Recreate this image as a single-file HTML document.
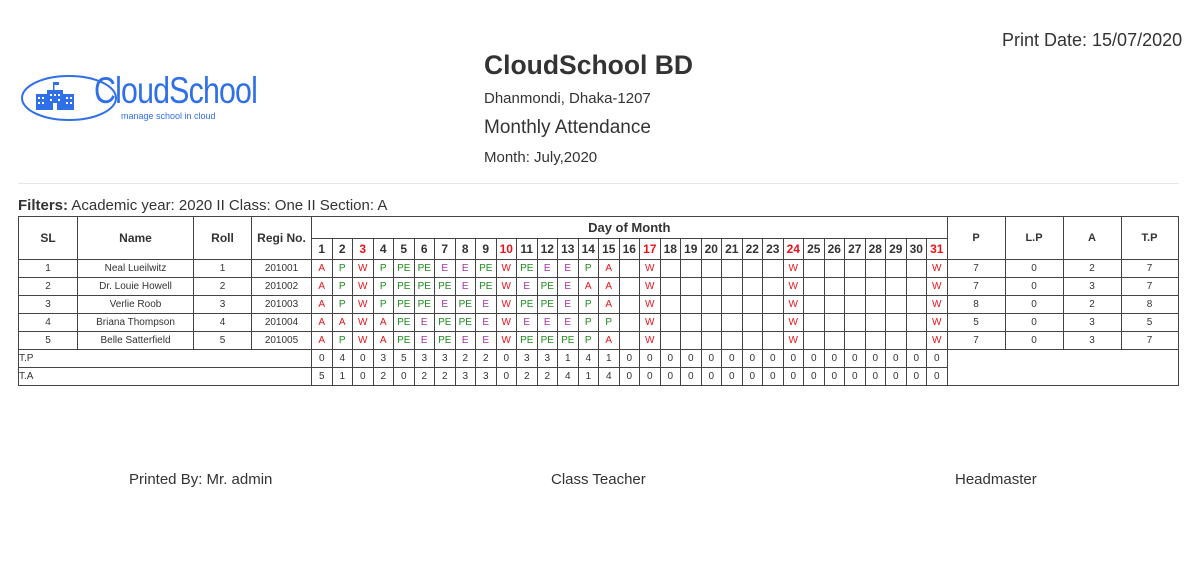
<!DOCTYPE html>
<html><head><meta charset="utf-8"><style>
*{margin:0;padding:0;box-sizing:border-box}
body{width:1196px;height:579px;background:#fff;font-family:"Liberation Sans",sans-serif;color:#333;position:relative;overflow:hidden}
.a{position:absolute;white-space:nowrap}
table{position:absolute;left:18px;top:216px;border-collapse:collapse;table-layout:fixed;font-size:10px}
td,th{border:1px solid #444;text-align:center;padding:0;overflow:hidden;white-space:nowrap}
th{font-weight:bold;font-size:12px}
tr.d td{height:18px}
.r{color:#e8141b}.g{color:#1c8c1c}.e{color:#a3339f}
th.r{color:#e8141b}
.l{text-align:left}
</style></head><body>
<div class="a" style="left:1002px;top:30px;font-size:18px">Print Date: 15/07/2020</div>
<div class="a" style="left:484px;top:50px;font-size:26.5px;font-weight:bold">CloudSchool BD</div>
<div class="a" style="left:484px;top:90px;font-size:15px">Dhanmondi, Dhaka-1207</div>
<div class="a" style="left:484px;top:117px;font-size:19px">Monthly Attendance</div>
<div class="a" style="left:484px;top:149px;font-size:15px">Month: July,2020</div>
<div class="a" style="left:18px;top:183px;width:1161px;height:1px;background:#e6e6e6"></div>
<svg class="a" style="left:20px;top:74px" width="100" height="48"><ellipse cx="49" cy="24" rx="47" ry="22" fill="none" stroke="#2f6fe8" stroke-width="2"/><g fill="#2f6fe8"><rect x="16" y="20" width="11" height="16"/><rect x="27" y="16" width="16" height="20"/><rect x="43" y="20" width="11" height="16"/><rect x="33" y="8" width="1.5" height="8"/><rect x="34" y="8" width="5" height="3"/></g><g fill="#fff"><rect x="18" y="23" width="2" height="2"/><rect x="22" y="23" width="2" height="2"/><rect x="18" y="28" width="2" height="2"/><rect x="22" y="28" width="2" height="2"/><rect x="30" y="20" width="2" height="2"/><rect x="34" y="20" width="2" height="2"/><rect x="38" y="20" width="2" height="2"/><rect x="30" y="25" width="2" height="2"/><rect x="38" y="25" width="2" height="2"/><rect x="33" y="29" width="4" height="7"/><rect x="46" y="23" width="2" height="2"/><rect x="50" y="23" width="2" height="2"/><rect x="46" y="28" width="2" height="2"/><rect x="50" y="28" width="2" height="2"/></g></svg>
<div class="a" style="left:94px;top:70px;font-size:37px;color:#2f6fe8;font-family:'Liberation Sans Narrow','Liberation Sans',sans-serif;transform:scaleX(0.82);transform-origin:left;letter-spacing:-1px;font-weight:100">CloudSchool</div>
<div class="a" style="left:121px;top:111px;font-size:9px;color:#2f6fe8">manage school in cloud</div>
<div class="a" style="left:18px;top:197px;font-size:15px"><b>Filters:</b> Academic year: 2020 II Class: One II Section: A</div>
<table id="t">
<colgroup><col style="width:59px"><col style="width:116px"><col style="width:58px"><col style="width:60px"></colgroup>
</table>
<div class="a" style="left:129px;top:471px;font-size:15px">Printed By: Mr. admin</div>
<div class="a" style="left:551px;top:471px;font-size:15px">Class Teacher</div>
<div class="a" style="left:955px;top:471px;font-size:15px">Headmaster</div>
<script>
var t=document.getElementById('t'),cg=t.querySelector('colgroup');
var h='';for(var i=0;i<31;i++)h+='<col style="width:20.5px">';h+='<col style="width:58px"><col style="width:58px"><col style="width:58px"><col style="width:57px">';cg.innerHTML+=h;
var red=[3,10,17,24,31];
var s='<tr><th rowspan=2>SL</th><th rowspan=2>Name</th><th rowspan=2>Roll</th><th rowspan=2>Regi No.</th><th colspan=31 style="height:22px;font-size:13px">Day of Month</th><th rowspan=2 style="font-size:11px">P</th><th rowspan=2 style="font-size:11px">L.P</th><th rowspan=2 style="font-size:11px">A</th><th rowspan=2 style="font-size:11px">T.P</th></tr><tr>';
for(i=1;i<=31;i++)s+='<th style="height:21px" class="'+(red.indexOf(i)>=0?'r':'')+'">'+i+'</th>';s+='</tr>';
var names=['Neal Lueilwitz','Dr. Louie Howell','Verlie Roob','Briana Thompson','Belle Satterfield'];
var d=['A P W P PE PE E E PE W PE E E P A','A P W P PE PE PE E PE W E PE E A A','A P W P PE PE E PE E W PE PE E P A','A A W A PE E PE PE E W E E E P P','A P W A PE E PE E E W PE PE PE P A'];
var tot=[[7,0,2,7],[7,0,3,7],[8,0,2,8],[5,0,3,5],[7,0,3,7]];
var cl={A:'r',W:'r',P:'g',PE:'g',E:'e'};
for(var r=0;r<5;r++){var a=d[r].split(' ');s+='<tr class="d"><td>'+(r+1)+'</td><td>'+names[r]+'</td><td>'+(r+1)+'</td><td>'+(201001+r)+'</td>';
for(i=1;i<=31;i++){var v=a[i-1]||'';if(i==17||i==24||i==31)v='W';s+='<td class="'+(cl[v]||'')+'">'+v+'</td>';}
for(var k=0;k<4;k++)s+='<td>'+tot[r][k]+'</td>';s+='</tr>';}
var tp=[0,4,0,3,5,3,3,2,2,0,3,3,1,4,1],ta=[5,1,0,2,0,2,2,3,3,0,2,2,4,1,4];
[['T.P',tp],['T.A',ta]].forEach(function(x,j){s+='<tr class="d"><td colspan=4 class="l">'+x[0]+'</td>';for(i=0;i<31;i++)s+='<td>'+(x[1][i]||0)+'</td>';if(j==0)s+='<td colspan=4 rowspan=2></td>';s+='</tr>';});
t.innerHTML+=s;
</script>
</body></html>
